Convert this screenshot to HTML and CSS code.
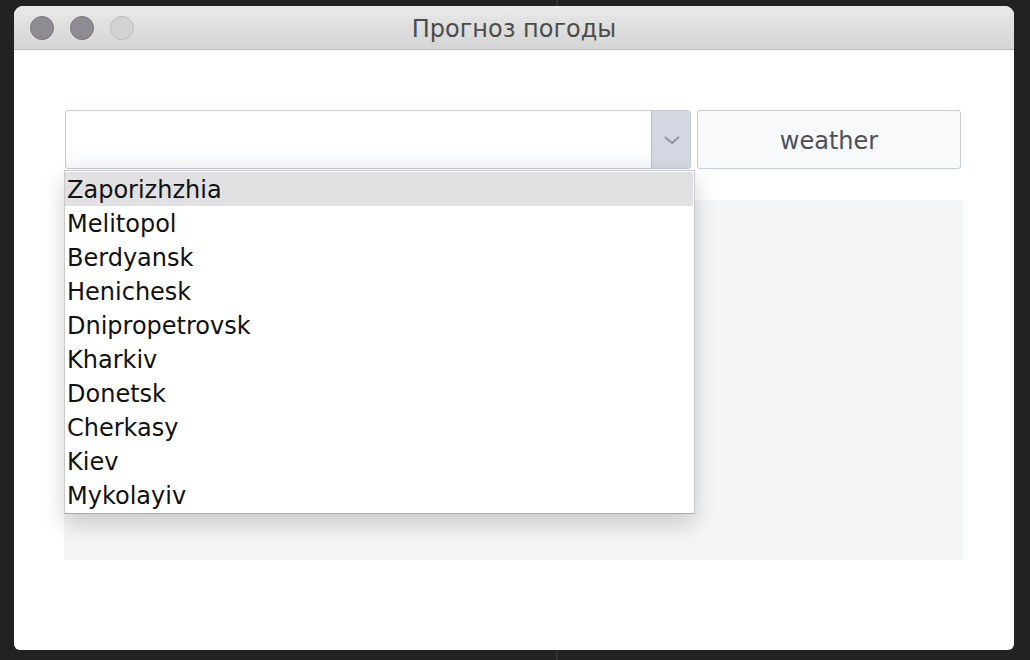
FILE: index.html
```html
<!DOCTYPE html>
<html lang="ru">
<head>
<meta charset="utf-8">
<title>Прогноз погоды</title>
<link rel="stylesheet" href="styles.css">
</head>
<body>
<div class="desktop">
  <div class="window">
    <div class="titlebar">
      <div class="lights">
        <span class="light dim"></span>
        <span class="light dim"></span>
        <span class="light off"></span>
      </div>
      <div class="title">Прогноз погоды</div>
      <div></div>
    </div>
    <div class="content">
      <div class="row">
        <div class="combo">
          <div class="combo-field"></div>
          <div class="combo-arrow">
            <svg width="18" height="10" viewBox="0 0 18 10"><path d="M2 2 L9 8 L16 2" fill="none" stroke="#8f939d" stroke-width="2"/></svg>
          </div>
          <ul class="list">
            <li class="item selected">Zaporizhzhia</li>
            <li class="item">Melitopol</li>
            <li class="item">Berdyansk</li>
            <li class="item">Henichesk</li>
            <li class="item">Dnipropetrovsk</li>
            <li class="item">Kharkiv</li>
            <li class="item">Donetsk</li>
            <li class="item">Cherkasy</li>
            <li class="item">Kiev</li>
            <li class="item">Mykolayiv</li>
          </ul>
        </div>
        <button class="btn">weather</button>
      </div>
      <div class="panel"></div>
    </div>
  </div>
</div>
</body>
</html>
```

FILE: styles.css
```css
html, body {
  margin: 0;
  padding: 0;
  background: #222222;
  font-family: "DejaVu Sans", sans-serif;
}

.desktop {
  position: relative;
  width: 1030px;
  height: 660px;
  padding: 6px 16px 0 14px;
  box-sizing: border-box;
}

.desktop::before {
  content: "";
  position: absolute;
  left: 556px;
  top: 0;
  bottom: 0;
  width: 2px;
  background: #333333;
}

.window {
  position: relative;
  z-index: 1;
  width: 1000px;
  height: 644px;
  background: #ffffff;
  border-radius: 9px 9px 6px 6px;
  overflow: hidden;
}

.titlebar {
  height: 43px;
  display: grid;
  grid-template-columns: 1fr auto 1fr;
  align-items: center;
  background: linear-gradient(#e9e9e9, #d4d4d4);
  border-bottom: 1px solid #b6b6b6;
}

.lights {
  display: flex;
  gap: 16px;
  padding-left: 16px;
}

.light {
  width: 24px;
  height: 24px;
  border-radius: 50%;
  box-sizing: border-box;
}

.light.dim {
  background: #8e8c92;
  border: 1px solid #767479;
}

.light.off {
  background: #d3d3d3;
  border: 1px solid #bcbcbc;
}

.title {
  font-size: 24px;
  color: #4c4c4c;
  padding-top: 2px;
}

.content {
  padding: 60px 0 0 50px;
}

.row {
  display: flex;
  gap: 6px;
  margin-left: 1px;
}

.combo {
  position: relative;
  width: 626px;
  height: 59px;
  box-sizing: border-box;
  border: 1px solid #c6cad7;
  border-radius: 3px;
  display: flex;
  background: linear-gradient(#ffffff 60%, #f6f7f9);
}

.combo-field {
  flex: 1;
}

.combo-arrow {
  width: 36px;
  background: #d3d7e1;
  border-left: 1px solid #b9becb;
  border-radius: 0 2px 2px 0;
  display: flex;
  align-items: center;
  justify-content: center;
  padding-left: 2px;
}

.list {
  position: absolute;
  top: 59px;
  left: -2px;
  width: 631px;
  margin: 0;
  padding: 1px 1px 1px 0;
  box-sizing: border-box;
  list-style: none;
  background: #ffffff;
  border: 1px solid #c9c9c9;
  border-bottom-color: #a9a9a9;
  box-shadow: 0 10px 22px rgba(0, 0, 0, 0.18);
  z-index: 2;
}

.item {
  height: 34px;
  line-height: 36px;
  padding-left: 2px;
  font-size: 24px;
  color: #111111;
}

.item.selected {
  background: #e1e1e4;
}

.btn {
  width: 264px;
  height: 59px;
  box-sizing: border-box;
  border: 1px solid #c6cbd9;
  border-radius: 3px;
  background: #f8f9fa;
  font-family: "DejaVu Sans", sans-serif;
  font-size: 24px;
  color: #4b4f58;
  padding: 3px 0 0 0;
}

.panel {
  margin-top: 31px;
  width: 899px;
  height: 360px;
  background: #f4f5f7;
}
```
